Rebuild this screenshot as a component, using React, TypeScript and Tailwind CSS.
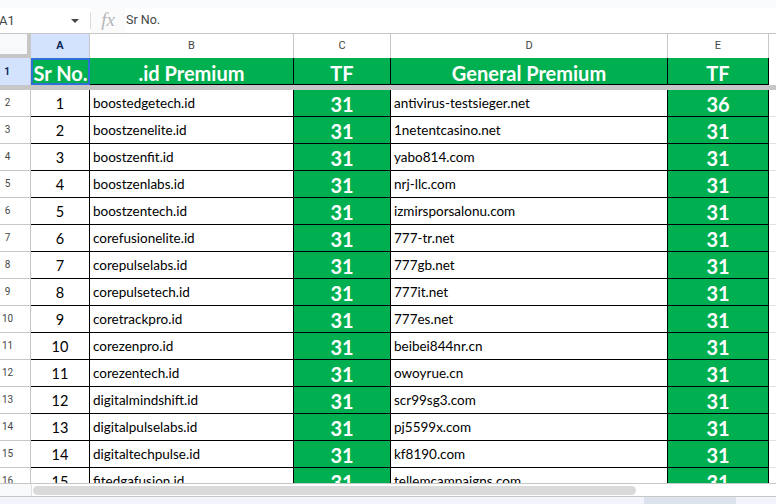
import React from "react";

const rows: [string, string, string, number][] = [
  ["1", "boostedgetech.id", "antivirus-testsieger.net", 36],
  ["2", "boostzenelite.id", "1netentcasino.net", 31],
  ["3", "boostzenfit.id", "yabo814.com", 31],
  ["4", "boostzenlabs.id", "nrj-llc.com", 31],
  ["5", "boostzentech.id", "izmirsporsalonu.com", 31],
  ["6", "corefusionelite.id", "777-tr.net", 31],
  ["7", "corepulselabs.id", "777gb.net", 31],
  ["8", "corepulsetech.id", "777it.net", 31],
  ["9", "coretrackpro.id", "777es.net", 31],
  ["10", "corezenpro.id", "beibei844nr.cn", 31],
  ["11", "corezentech.id", "owoyrue.cn", 31],
  ["12", "digitalmindshift.id", "scr99sg3.com", 31],
  ["13", "digitalpulselabs.id", "pj5599x.com", 31],
  ["14", "digitaltechpulse.id", "kf8190.com", 31],
  ["15", "fitedgafusion.id", "tellemcampaigns.com", 31],
];

const columns = "grid-cols-[31px_59px_204px_97px_277px_101px_7px]";
const colHeads = ["B", "C", "D", "E"];
const heads = [".id Premium", "TF", "General Premium", "TF"];

export default function App() {
  return (
    <div className="w-[776px] h-[504px] overflow-hidden bg-white flex flex-col font-['Lato',sans-serif]">
      <div className="h-2 bg-[#f9fbfd]" />

      {/* formula bar */}
      <div className="h-[26px] flex items-center border-b border-[#c7c7c7] font-['Roboto',sans-serif] text-[#444746]">
        <div className="w-[91px] flex items-center justify-between pr-[11px] text-[13px] -ml-px">
          <span>A1</span>
          <span className="w-0 h-0 border-x-[4px] border-x-transparent border-t-[4px] border-t-[#444746]" />
        </div>
        <div className="w-px h-[17px] bg-[#dadce0]" />
        <div className="w-[34px] h-full flex items-center justify-center bg-[#fbfbfb]">
          <span className="font-['Liberation_Serif',serif] italic text-[19px] text-[#b4b6b8]">fx</span>
        </div>
        <span className="text-[12.5px] ml-px">Sr No.</span>
      </div>

      {/* column letters */}
      <div className={`grid ${columns} grid-rows-[24px] h-[24px] font-['Roboto',sans-serif] text-[11px] text-[#444746]`}>
        <div className="bg-[#f8f9fa] border-r-[4px] border-b-[4px] border-[#c7c7c7]" />
        <div className="bg-[#d3e3fd] flex items-center justify-center font-bold text-[#0b2a5c] border-r border-[#c7c7c7]">A</div>
        {colHeads.map((c) => (
          <div key={c} className="flex items-center justify-center border-r border-[#c7c7c7]">{c}</div>
        ))}
        <div />
      </div>

      {/* frozen row */}
      <div className={`grid ${columns} grid-rows-[27px] h-[27px]`}>
        <div className="bg-[#d3e3fd] flex items-center font-['Roboto',sans-serif] text-[10px] font-bold text-[#0b2a5c] border-r border-[#c7c7c7]">
          <span className="w-[14px] text-center">1</span>
        </div>
        <div className="bg-[#00b050] text-white font-bold text-[20px] leading-none flex items-center justify-center pt-[2px] border-2 border-[#2f6fd6] whitespace-nowrap">Sr No.</div>
        {heads.map((h, i) => (
          <div key={i} className="bg-[#00b050] text-white font-bold text-[20px] leading-none flex items-center justify-center pt-[3px] border-r border-b border-black">{h}</div>
        ))}
        <div />
      </div>
      <div className="h-[5px] bg-[#c7c7c7] shrink-0" />

      {/* data rows */}
      <div className="h-[393px] overflow-hidden shrink-0">
        {rows.map((r, i) => (
          <div key={r[0]} className={`grid ${columns} grid-rows-[27px] h-[27px] text-[13.5px] leading-none text-black`}>
            <div className="flex items-center pb-[1px] font-['Roboto',sans-serif] text-[10px] text-[#444746] border-r border-b border-[#c7c7c7]">
              <span className="w-[15px] text-center">{i + 2}</span>
            </div>
            <div className="flex items-center justify-center pt-[2px] text-[14.5px] border-r border-b border-black">{r[0]}</div>
            <div className="flex items-center pl-[3px] pt-[2px] border-r border-b border-black">{r[1]}</div>
            <div className="bg-[#00b050] text-white font-bold text-[20px] flex items-center justify-center pt-[2px] border-r border-b border-black">31</div>
            <div className="flex items-center pl-[3px] pt-[2px] border-r border-b border-black">{r[2]}</div>
            <div className="bg-[#00b050] text-white font-bold text-[20px] flex items-center justify-center pt-[2px] border-r border-b border-black">{r[3]}</div>
            <div className="border-b border-[#e1e1e1]" />
          </div>
        ))}
      </div>

      {/* scrollbar */}
      <div className="h-[14px] shrink-0 border-y border-[#c7c7c7] flex items-center bg-white">
        <div className="w-[32px] h-full bg-[#f8f9fa] border-r border-[#e1e1e1]" />
        <div className="ml-px w-[603px] h-[9px] rounded-full bg-[#dadada]" />
      </div>
      <div className="flex-1 bg-[#f1f5fb] flex">
        <div className="ml-[644px] w-[92px] bg-[#dde3ec]" />
      </div>
    </div>
  );
}
